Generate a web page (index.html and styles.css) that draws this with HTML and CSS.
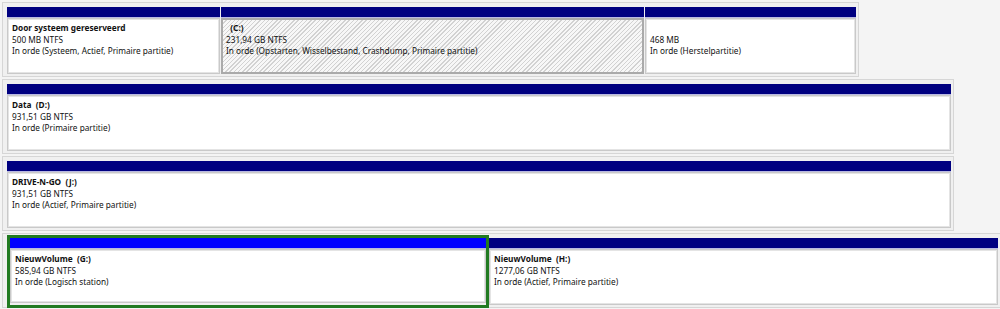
FILE: index.html
```html
<!DOCTYPE html>
<html>
  <head>
    <title>Schijfbeheer</title>
    <meta name="viewport" content="width=device-width, initial-scale=1.0" />
    <link rel="stylesheet" href="styles.css">
  </head>
  <body>
    <div class="disks">
      <div class="disk" style="width: 857px">
        <div class="partition" style="width: 213px">
          <div class="bar"></div>
          <div class="body">
            <div class="name">Door systeem gereserveerd</div>
            <div>500 MB NTFS</div>
            <div>In orde (Systeem, Actief, Primaire partitie)</div>
          </div>
        </div>
        <div class="partition" style="width: 423px">
          <div class="bar"></div>
          <div class="body hatched">
            <div class="name">&nbsp;&nbsp;(C:)</div>
            <div>231,94 GB NTFS</div>
            <div>In orde (Opstarten, Wisselbestand, Crashdump, Primaire partitie)</div>
          </div>
        </div>
        <div class="partition" style="width: 211px">
          <div class="bar"></div>
          <div class="body">
            <div class="name">&nbsp;</div>
            <div>468 MB</div>
            <div>In orde (Herstelpartitie)</div>
          </div>
        </div>
      </div>

      <div class="disk" style="width: 952px">
        <div class="partition grow">
          <div class="bar"></div>
          <div class="body">
            <div class="name">Data&nbsp; (D:)</div>
            <div>931,51 GB NTFS</div>
            <div>In orde (Primaire partitie)</div>
          </div>
        </div>
      </div>

      <div class="disk" style="width: 952px">
        <div class="partition grow">
          <div class="bar"></div>
          <div class="body">
            <div class="name">DRIVE-N-GO&nbsp; (J:)</div>
            <div>931,51 GB NTFS</div>
            <div>In orde (Actief, Primaire partitie)</div>
          </div>
        </div>
      </div>

      <div class="disk" style="width: 1004px">
        <div class="partition selected" style="width: 476px">
          <div class="bar logical"></div>
          <div class="body">
            <div class="name">NieuwVolume&nbsp; (G:)</div>
            <div>585,94 GB NTFS</div>
            <div>In orde (Logisch station)</div>
          </div>
        </div>
        <div class="partition" style="width: 509px">
          <div class="bar"></div>
          <div class="body">
            <div class="name">NieuwVolume&nbsp; (H:)</div>
            <div>1277,06 GB NTFS</div>
            <div>In orde (Actief, Primaire partitie)</div>
          </div>
        </div>
      </div>
    </div>
  </body>
</html>
```

FILE: styles.css
```css
body {
  margin: 0;
  background: #f4f4f4;
  font-family: "Noto Sans", "Open Sans", sans-serif;
  font-size: 8.25px;
  color: #111;
  overflow: hidden;
}
.disks {
  padding-top: 2px;
  padding-left: 2px;
}
.disk {
  display: flex;
  gap: 1px;
  box-sizing: border-box;
  height: 75px;
  margin-bottom: 2px;
  padding: 4px 2px 2px 4px;
  background: #f0f0f0;
  border: 1px solid #d6d6d6;
}
.partition {
  display: flex;
  flex-direction: column;
  flex-shrink: 0;
}
.partition.grow {
  flex: 1;
}
.bar {
  height: 10px;
  background: #000080;
  border-bottom: 1px solid #b9b9e2;
}
.bar.logical {
  background: #0000ff;
}
.body {
  box-sizing: border-box;
  height: 56px;
  padding: 3px 4px;
  background: #fff;
  border: 1px solid #c9c9c9;
  box-shadow: inset 0 0 0 1px #e4e4e4;
  line-height: 11.5px;
  white-space: nowrap;
  overflow: hidden;
}
.body.hatched {
  border: 2px solid #aaaaaa;
  box-shadow: none;
  padding: 2px 3px;
  background: repeating-linear-gradient(135deg, #f7f7f7 0 2px, #d2d2d2 2px 3px);
}
.name {
  font-weight: bold;
}
.selected {
  margin-left: 3px;
  margin-right: 2px;
  outline: 3px solid #217a21;
}
.selected .body {
  height: 54px;
}
```
